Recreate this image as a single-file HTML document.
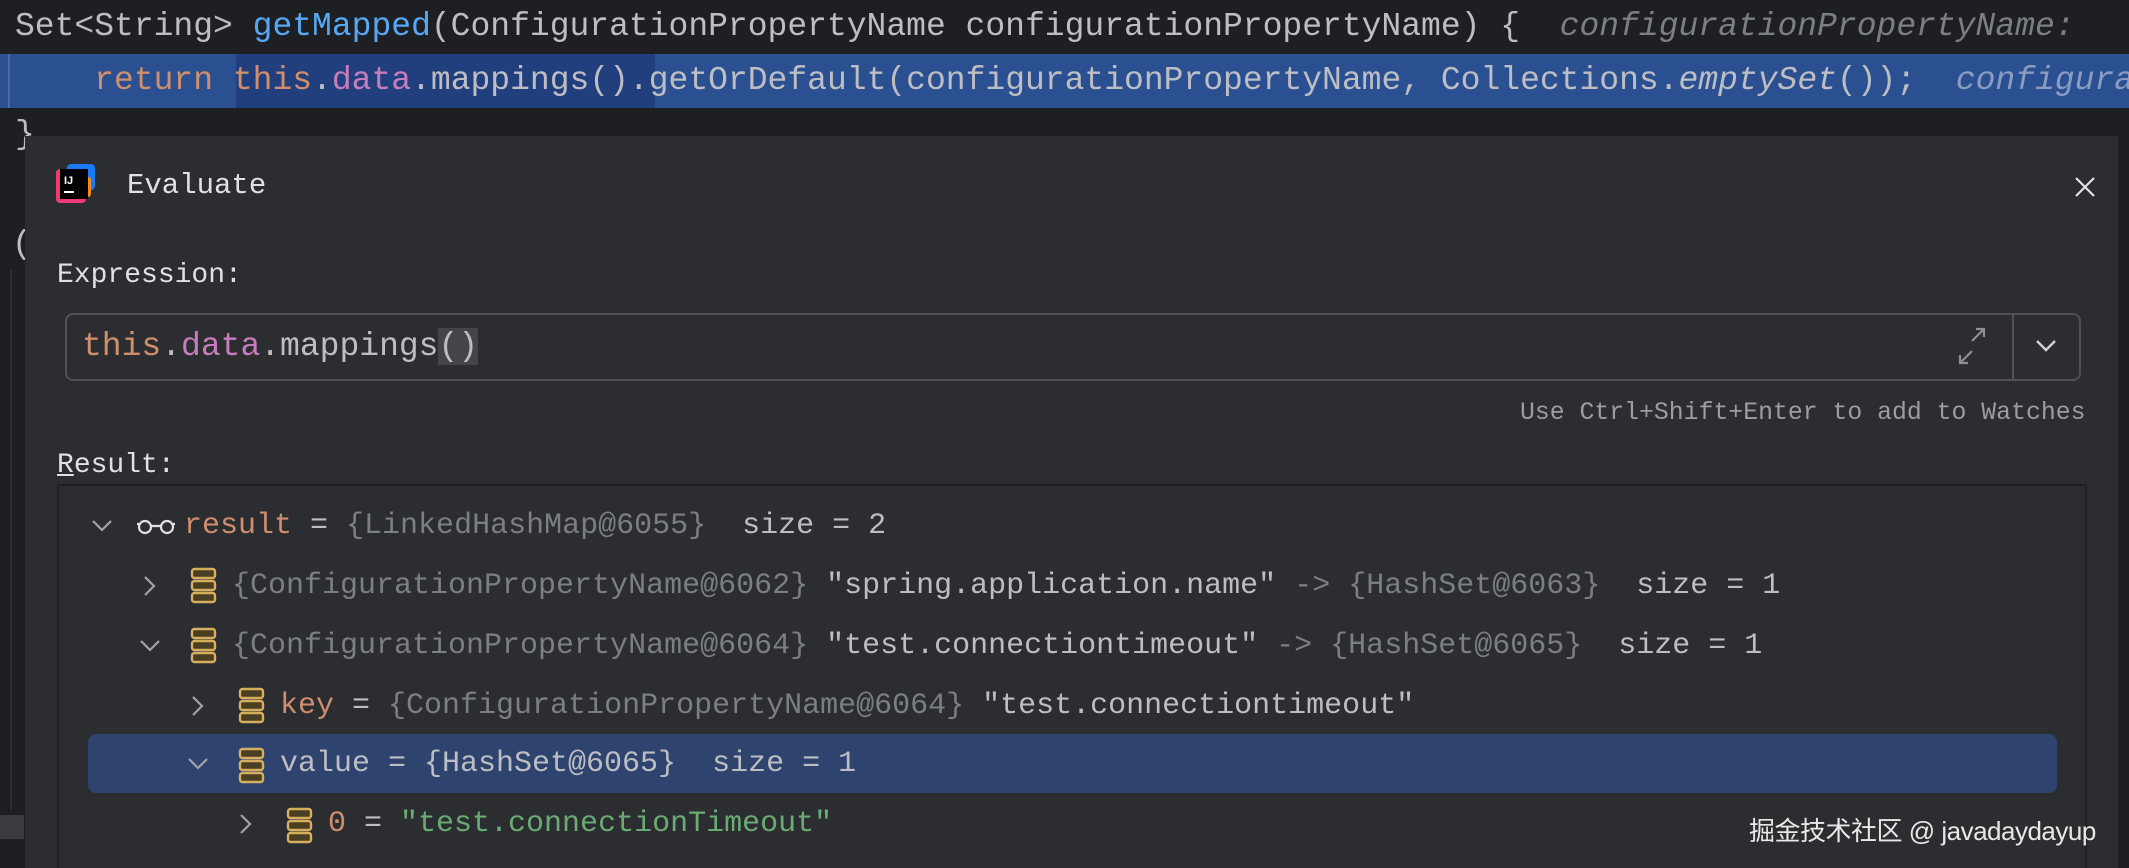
<!DOCTYPE html>
<html><head><meta charset="utf-8"><style>
*{margin:0;padding:0;box-sizing:border-box}
html,body{width:2129px;height:868px;overflow:hidden}
body{background:#1e1f22;position:relative;font-family:"Liberation Mono",monospace;color:#bcbec4}
.a{position:absolute;white-space:pre}
.code{font-size:33px;line-height:54px}
.t{font-size:30px;line-height:40px}
.k{color:#cf8e6d}.f{color:#c77dbb}.m{color:#56a8f5}.g{color:#7a7e85}.s{color:#6aab73}.h{color:#7a7e85;font-style:italic}
.clip{position:absolute;left:0;width:2129px;overflow:hidden}
</style></head><body>
<div class="clip" style="top:0;height:54px;background:#1e1f22">
<div class="a code" style="left:15px;top:0">Set&lt;String&gt; <span class="m">getMapped</span>(ConfigurationPropertyName configurationPropertyName) {  <span class="h">configurationPropertyName: </span></div>
</div>
<div class="clip" style="top:54px;height:54px;background:#2b5091">
<div class="a" style="left:236px;top:0;width:419px;height:54px;background:#213f7d"></div>
<div class="a" style="left:8px;top:0;width:2px;height:54px;background:#4a6aa8"></div>
<div class="a code" style="left:15px;top:0">    <span class="k">return this</span>.<span class="f">data</span>.mappings().getOrDefault(configurationPropertyName, Collections.<i>emptySet</i>());  <span class="h" style="color:#8a9cc0">configurationPropertyName</span></div>
</div>
<div class="a code" style="left:15px;top:108px">}</div>
<div class="a code" style="left:12px;top:218px">(</div>
<div class="a" style="left:10px;top:270px;width:2px;height:540px;background:#2b2d30"></div>
<div class="a" style="left:0;top:815px;width:24px;height:24px;background:#3a3c40"></div>

<div class="a" style="left:25px;top:136px;width:2093px;height:732px;background:#2b2d30"></div>
<svg class="a" style="left:55px;top:163px" width="42" height="42" viewBox="0 0 42 42">
<rect x="12" y="1" width="28" height="26" rx="4" fill="#1a7cf5"/>
<rect x="1" y="6" width="30" height="34" rx="4" fill="#f0397a"/>
<rect x="20" y="14" width="16" height="20" rx="3" fill="#f58b1f"/>
<rect x="5" y="6" width="28" height="30" fill="#000"/>
<text x="9" y="21" font-family="Liberation Sans" font-weight="bold" font-size="11" fill="#fff">IJ</text>
<rect x="9" y="28" width="10" height="2" fill="#fff"/>
</svg>
<div class="a" style="left:127px;top:166px;font-size:29px;line-height:40px;color:#dfe1e5">Evaluate</div>
<svg class="a" style="left:2073px;top:175px" width="24" height="24"><path d="M3 3L21 21M21 3L3 21" stroke="#dfe1e5" stroke-width="2.2"/></svg>
<div class="a" style="left:57px;top:256px;font-size:28px;line-height:40px;color:#dfe1e5">Expression:</div>
<div class="a" style="left:65px;top:313px;width:2016px;height:68px;border:2px solid #4e5157;border-radius:8px"></div>
<div class="a" style="left:2012px;top:315px;width:2px;height:64px;background:#4e5157"></div>
<div class="a code" style="left:82px;top:320px"><span class="k">this</span>.<span class="f">data</span>.mappings<span style="background:#43454a">()</span></div>
<svg class="a" style="left:1950px;top:324px" width="44" height="44"><path d="M34 5L22 17M26 5H34V13M10 39L22 27M10 31V39H18" stroke="#8c8f94" stroke-width="2.2" fill="none"/></svg>
<svg class="a" style="left:2034px;top:336px" width="24" height="20"><path d="M3 5L12 14L21 5" stroke="#cfd1d5" stroke-width="2.4" fill="none"/></svg>
<div class="a" style="left:1520px;top:398px;font-size:24.8px;line-height:30px;color:#9a9da3">Use Ctrl+Shift+Enter to add to Watches</div>
<div class="a" style="left:57px;top:446px;font-size:28px;line-height:40px;color:#dfe1e5"><u>R</u>esult:</div>

<div class="a" style="left:57px;top:484px;width:2030px;height:400px;border-top:2px solid #1f2023;border-left:2px solid #1f2023;border-right:2px solid #1f2023"></div>
<div class="a" style="left:88px;top:734px;width:1969px;height:59px;background:#2e436e;border-radius:8px"></div>

<svg class="a" style="left:90px;top:516px" width="24" height="20"><path d="M3 5L12 14L21 5" stroke="#a0a3a8" stroke-width="2.2" fill="none"/></svg>
<svg class="a" style="left:140px;top:574px" width="20" height="24"><path d="M5 3L14 12L5 21" stroke="#a0a3a8" stroke-width="2.2" fill="none"/></svg>
<svg class="a" style="left:138px;top:636px" width="24" height="20"><path d="M3 5L12 14L21 5" stroke="#a0a3a8" stroke-width="2.2" fill="none"/></svg>
<svg class="a" style="left:188px;top:694px" width="20" height="24"><path d="M5 3L14 12L5 21" stroke="#a0a3a8" stroke-width="2.2" fill="none"/></svg>
<svg class="a" style="left:186px;top:754px" width="24" height="20"><path d="M3 5L12 14L21 5" stroke="#a0a3a8" stroke-width="2.2" fill="none"/></svg>
<svg class="a" style="left:236px;top:812px" width="20" height="24"><path d="M5 3L14 12L5 21" stroke="#a0a3a8" stroke-width="2.2" fill="none"/></svg>
<svg class="a" style="left:136px;top:516px" width="40" height="20"><circle cx="9" cy="11" r="6" stroke="#dfe1e5" stroke-width="2.2" fill="none"/><circle cx="31" cy="11" r="6" stroke="#dfe1e5" stroke-width="2.2" fill="none"/><path d="M15 10H25M1 8H3M37 8H39" stroke="#dfe1e5" stroke-width="2.2"/></svg>
<svg class="a" style="left:190px;top:566px" width="28" height="40"><g fill="#4a3f22" stroke="#d6ae5f" stroke-width="2.4"><rect x="2" y="3" width="23" height="9" rx="2.5"/><rect x="2" y="15" width="23" height="9" rx="2.5"/><rect x="2" y="27" width="23" height="9" rx="2.5"/></g></svg>
<svg class="a" style="left:190px;top:626px" width="28" height="40"><g fill="#4a3f22" stroke="#d6ae5f" stroke-width="2.4"><rect x="2" y="3" width="23" height="9" rx="2.5"/><rect x="2" y="15" width="23" height="9" rx="2.5"/><rect x="2" y="27" width="23" height="9" rx="2.5"/></g></svg>
<svg class="a" style="left:238px;top:686px" width="28" height="40"><g fill="#4a3f22" stroke="#d6ae5f" stroke-width="2.4"><rect x="2" y="3" width="23" height="9" rx="2.5"/><rect x="2" y="15" width="23" height="9" rx="2.5"/><rect x="2" y="27" width="23" height="9" rx="2.5"/></g></svg>
<svg class="a" style="left:238px;top:746px" width="28" height="40"><g fill="#4a3f22" stroke="#d6ae5f" stroke-width="2.4"><rect x="2" y="3" width="23" height="9" rx="2.5"/><rect x="2" y="15" width="23" height="9" rx="2.5"/><rect x="2" y="27" width="23" height="9" rx="2.5"/></g></svg>
<svg class="a" style="left:286px;top:806px" width="28" height="40"><g fill="#4a3f22" stroke="#d6ae5f" stroke-width="2.4"><rect x="2" y="3" width="23" height="9" rx="2.5"/><rect x="2" y="15" width="23" height="9" rx="2.5"/><rect x="2" y="27" width="23" height="9" rx="2.5"/></g></svg>

<div class="a t" style="left:184px;top:506px"><span class="k">result</span> = <span class="g">{LinkedHashMap@6055}</span>  size = 2</div>
<div class="a t" style="left:232px;top:566px"><span class="g">{ConfigurationPropertyName@6062}</span> "spring.application.name" <span class="g">-&gt; {HashSet@6063}</span>  size = 1</div>
<div class="a t" style="left:232px;top:626px"><span class="g">{ConfigurationPropertyName@6064}</span> "test.connectiontimeout" <span class="g">-&gt; {HashSet@6065}</span>  size = 1</div>
<div class="a t" style="left:280px;top:686px"><span class="k">key</span> = <span class="g">{ConfigurationPropertyName@6064}</span> "test.connectiontimeout"</div>
<div class="a t" style="left:280px;top:744px">value = {HashSet@6065}  size = 1</div>
<div class="a t" style="left:328px;top:804px"><span class="k">0</span> = <span class="s">"test.connectionTimeout"</span></div>

<div class="a" style="left:1749px;top:813px;font-family:'Liberation Sans','Noto Sans CJK SC',sans-serif;font-size:26px;line-height:36px;color:#e8e8e8;letter-spacing:-0.5px">掘金技术社区 @ javadaydayup</div>
</body></html>
